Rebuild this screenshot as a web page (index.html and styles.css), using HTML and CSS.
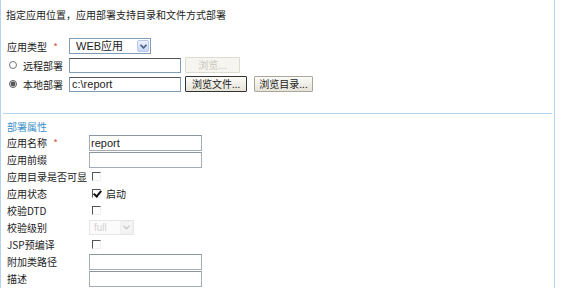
FILE: index.html
```html
<!DOCTYPE html>
<html lang="zh-Hans">

<head>
    <meta charset="UTF-8">
    <title>应用部署</title>
    <link rel="stylesheet" href="styles.css">
</head>

<body>
    <div class="panel">
        <p class="intro">指定应用位置，应用部署支持目录和文件方式部署</p>

        <div class="deploy">
            <div class="row">
                <span class="label">应用类型 <i class="req">*</i></span>
                <div class="select-wrap type">
                    <select class="type-select">
                        <option>WEB应用</option>
                    </select>
                    <span class="arrow">
                        <svg width="7" height="5" viewBox="0 0 7 5"><path d="M0.5 0.8 L3.5 3.8 L6.5 0.8" fill="none" stroke="#4d6185" stroke-width="1.6"/></svg>
                    </span>
                </div>
            </div>
            <div class="row">
                <label class="label radio"><input type="radio" name="mode">远程部署</label>
                <input type="text" class="path">
                <button class="btn small" disabled>浏览...</button>
            </div>
            <div class="row">
                <label class="label radio"><input type="radio" name="mode" checked>本地部署</label>
                <input type="text" class="path" value="c:\report">
                <button class="btn focus">浏览文件...</button>
                <button class="btn">浏览目录...</button>
            </div>
        </div>

        <div class="section">
            <div class="section-title">部署属性</div>
            <div class="prop">
                <span class="label">应用名称 <i class="req">*</i></span>
                <input type="text" class="field" value="report">
            </div>
            <div class="prop">
                <span class="label">应用前缀</span>
                <input type="text" class="field">
            </div>
            <div class="prop">
                <span class="label">应用目录是否可显</span>
                <input type="checkbox" class="check">
            </div>
            <div class="prop">
                <span class="label">应用状态</span>
                <label class="check-label"><input type="checkbox" class="check" checked>启动</label>
            </div>
            <div class="prop">
                <span class="label">校验DTD</span>
                <input type="checkbox" class="check">
            </div>
            <div class="prop">
                <span class="label">校验级别</span>
                <div class="select-wrap level">
                    <select class="level-select" disabled>
                        <option>full</option>
                    </select>
                    <span class="arrow">
                        <svg width="7" height="5" viewBox="0 0 7 5"><path d="M0.5 0.8 L3.5 3.8 L6.5 0.8" fill="none" stroke="#c9c9c9" stroke-width="1.4"/></svg>
                    </span>
                </div>
            </div>
            <div class="prop">
                <span class="label">JSP预编译</span>
                <input type="checkbox" class="check">
            </div>
            <div class="prop">
                <span class="label">附加类路径</span>
                <input type="text" class="field">
            </div>
            <div class="prop">
                <span class="label">描述</span>
                <input type="text" class="field">
            </div>
        </div>
    </div>
</body>

</html>
```

FILE: styles.css
```css
body {
    margin: 0;
    background: #fff;
    font-family: "Noto Sans CJK SC", "Liberation Sans", sans-serif;
    font-size: 10px;
    color: #222;
}

.panel {
    width: 553px;
    height: 288px;
    border-left: 1px solid #b5d3ee;
    border-right: 1px solid #b5d3ee;
    overflow: hidden;
}

.intro {
    margin: 0;
    padding: 8px 0 0 5px;
    height: 24px;
    line-height: 14px;
}

.deploy {
    padding: 4px 0 0 6px;
    height: 77px;
}

.row {
    display: flex;
    align-items: center;
    height: 18px;
    margin-bottom: 1px;
}

.row:first-child {
    height: 20px;
    margin-bottom: 0;
}

.row .label {
    width: 62px;
    flex: none;
    white-space: nowrap;
}

.req {
    font-style: normal;
    color: #e05050;
    margin-left: 4px;
}

.radio {
    display: flex;
    align-items: center;
}

.radio input {
    margin: 0 6px 0 2px;
    width: 8px;
    height: 8px;
    accent-color: #555;
}

/* 下拉框 */
.select-wrap {
    position: relative;
    display: flex;
}

.select-wrap select {
    appearance: none;
    box-sizing: border-box;
    margin: 0;
    outline: none;
}

.type-select {
    width: 82px;
    height: 16px;
    font-family: "Liberation Sans", "Noto Sans CJK SC", sans-serif;
    font-size: 11px;
    border: 1px solid #7f9db9;
    padding: 0 0 0 6px;
    background: #fff;
    color: #222;
}

.arrow {
    position: absolute;
    top: 2px;
    right: 2px;
    width: 12px;
    height: 12px;
    box-sizing: border-box;
    display: flex;
    align-items: center;
    justify-content: center;
    border: 1px solid #b5c8e8;
    border-radius: 2px;
    background: linear-gradient(#eef3fd, #c6d6f7);
}

.level .arrow {
    top: 1px;
    right: 1px;
    width: 13px;
    height: 13px;
    border-color: #efefef;
    background: #f4f4f4;
}

.level-select {
    width: 45px;
    height: 15px;
    padding: 0 0 0 4px;
    font-size: 10px;
    font-family: "Liberation Sans", sans-serif;
    color: #c0c0c0;
    border: 1px solid #dcdcdc;
    background: #fafafa;
}

.path {
    width: 112px;
    height: 15px;
    box-sizing: border-box;
    border: 1px solid #7f9db9;
    border-top-color: #555;
    padding: 0 2px;
    font-family: "Liberation Sans", sans-serif;
    font-size: 11px;
    color: #222;
}

.btn {
    height: 16px;
    margin-left: 4px;
    padding: 0 4px;
    font-family: "Noto Sans CJK SC", sans-serif;
    font-size: 10px;
    line-height: 12px;
    color: #222;
    background: linear-gradient(#fbfbf7, #e6e3d8);
    border: 1px solid #aaa79a;
    border-radius: 1px;
}

.btn + .btn {
    margin-left: 7px;
}

.btn.focus {
    border-color: #333;
    padding: 0 6px;
}

.btn.small {
    width: 55px;
    color: #c8c6bc;
    border-color: #dedbd0;
    background: #f6f5ef;
}

.section {
    border-top: 1px solid #b5d3ee;
    margin: 0 2px 0 2px;
    padding: 5px 0 0 4px;
}

.section-title {
    color: #3a8fc8;
    height: 15px;
    line-height: 15px;
}

.prop {
    display: flex;
    align-items: center;
    height: 17px;
}

.prop .label {
    width: 82px;
    flex: none;
    white-space: nowrap;
}

.field {
    width: 113px;
    height: 16px;
    box-sizing: border-box;
    border: 1px solid #a5acb5;
    border-top-color: #8f959c;
    padding: 0 1px;
    font-family: "Liberation Sans", sans-serif;
    font-size: 11px;
    color: #222;
}

.check {
    appearance: none;
    position: relative;
    width: 9px;
    height: 9px;
    margin: 0 0 0 3px;
    box-sizing: border-box;
    border: 1px solid #f0f0f0;
    border-top-color: #555;
    border-left-color: #555;
    background: #fff;
}

.check:checked::after {
    content: "";
    position: absolute;
    left: 2px;
    top: -1px;
    width: 3px;
    height: 6px;
    border: solid #111;
    border-width: 0 2px 2px 0;
    transform: rotate(40deg);
}

.check-label {
    display: flex;
    align-items: center;
}

.check-label .check {
    margin-right: 5px;
}
```
